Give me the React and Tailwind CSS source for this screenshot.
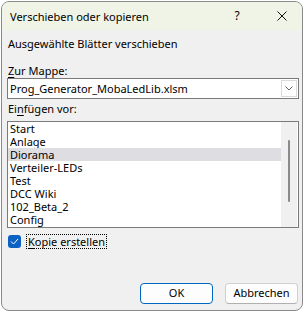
export default function App() {
  const items = ["Start", "Anlage", "Diorama", "Verteiler-LEDs", "Test", "DCC Wiki", "102_Beta_2", "Config"];
  return (
    <div className="w-[306px] h-[313px] bg-[#ffffff] relative overflow-hidden" style={{ fontFamily: '"Noto Sans", "Segoe UI", sans-serif' }}>
      <div className="absolute left-[1px] top-[1px] w-[302px] h-[310px] rounded-[8px] border border-[#8a8a8a] bg-[#f0f0f0] overflow-hidden flex flex-col text-[11px] text-[#000]">
        <div className="h-[28px] bg-[#eff4e6] flex items-center pl-[8px] shrink-0">
          <span className="text-[11px] leading-none">Verschieben oder kopieren</span>
          <span className="ml-auto w-[12px] text-center text-[12px] leading-none mr-[34px]">?</span>
          <svg width="10" height="10" viewBox="0 0 10 10" className="mr-[15px]">
            <path d="M0.5 0.5 L9.5 9.5 M9.5 0.5 L0.5 9.5" stroke="#111" strokeWidth="1" />
          </svg>
        </div>
        <div className="pl-[5px] pr-[3px] flex flex-col">
          <div className="leading-[16px] pl-[1px] mt-[6px]">Ausgewählte Blätter verschieben</div>
          <div className="leading-[14px] pl-[1px] mt-[12px]"><span className="underline underline-offset-2">Z</span>ur Mappe:</div>
          <div className="h-[21px] bg-white border border-[#7a7a7a] flex items-center">
            <span className="pl-[2px] leading-none">Prog_Generator_MobaLedLib.xlsm</span>
            <div className="ml-auto mr-[1px] w-[16px] h-[17px] border border-[#dadada] bg-white flex items-center justify-center">
              <svg width="8" height="5" viewBox="0 0 8 5"><path d="M0.5 0.5 L4 4 L7.5 0.5" stroke="#666" fill="none" strokeWidth="1" /></svg>
            </div>
          </div>
          <div className="leading-[14px] pl-[1px] mt-[3px]">Ei<span className="underline underline-offset-2">n</span>fügen vor:</div>
          <div className="mt-[5px] h-[107px] bg-white border border-[#7a7a7a] flex">
            <div className="flex-1 flex flex-col">
              {items.map((it, i) => (
                <div key={it} className={`h-[13px] leading-[13px] pl-[2px] ${i === 2 ? "bg-[#dddde2]" : ""}`}>{it}</div>
              ))}
            </div>
            <div className="w-[16px] bg-[#f0f0f0] mr-[1px] flex justify-center pt-[18px]">
              <div className="w-[2px] h-[62px] bg-[#8a8a8a] rounded-full" />
            </div>
          </div>
          <div className="flex items-center mt-[6px] pl-[1px] h-[15px]">
            <div className="w-[13px] h-[13px] rounded-[3px] bg-[#0b61c4] flex items-center justify-center">
              <svg width="9" height="7" viewBox="0 0 9 7"><path d="M1 3.5 L3.5 6 L8 1" stroke="#fff" fill="none" strokeWidth="1" /></svg>
            </div>
            <div className="ml-[5px] h-[15px] border border-dotted border-[#000] px-[1px] leading-[13px]"><span className="underline underline-offset-2">K</span>opie erstellen</div>
          </div>
        </div>
        <div className="mt-auto mb-[6px] flex justify-end gap-[12px] pr-[4px]">
          <div className="w-[73px] h-[21px] rounded-[4px] bg-[#fdfdfd] border border-[#0067c0] flex items-center justify-center">OK</div>
          <div className="w-[73px] h-[21px] rounded-[4px] bg-[#fdfdfd] border border-[#d0d0d0] border-b-[#b0b0b0] flex items-center justify-center">Abbrechen</div>
        </div>
      </div>
    </div>
  );
}
